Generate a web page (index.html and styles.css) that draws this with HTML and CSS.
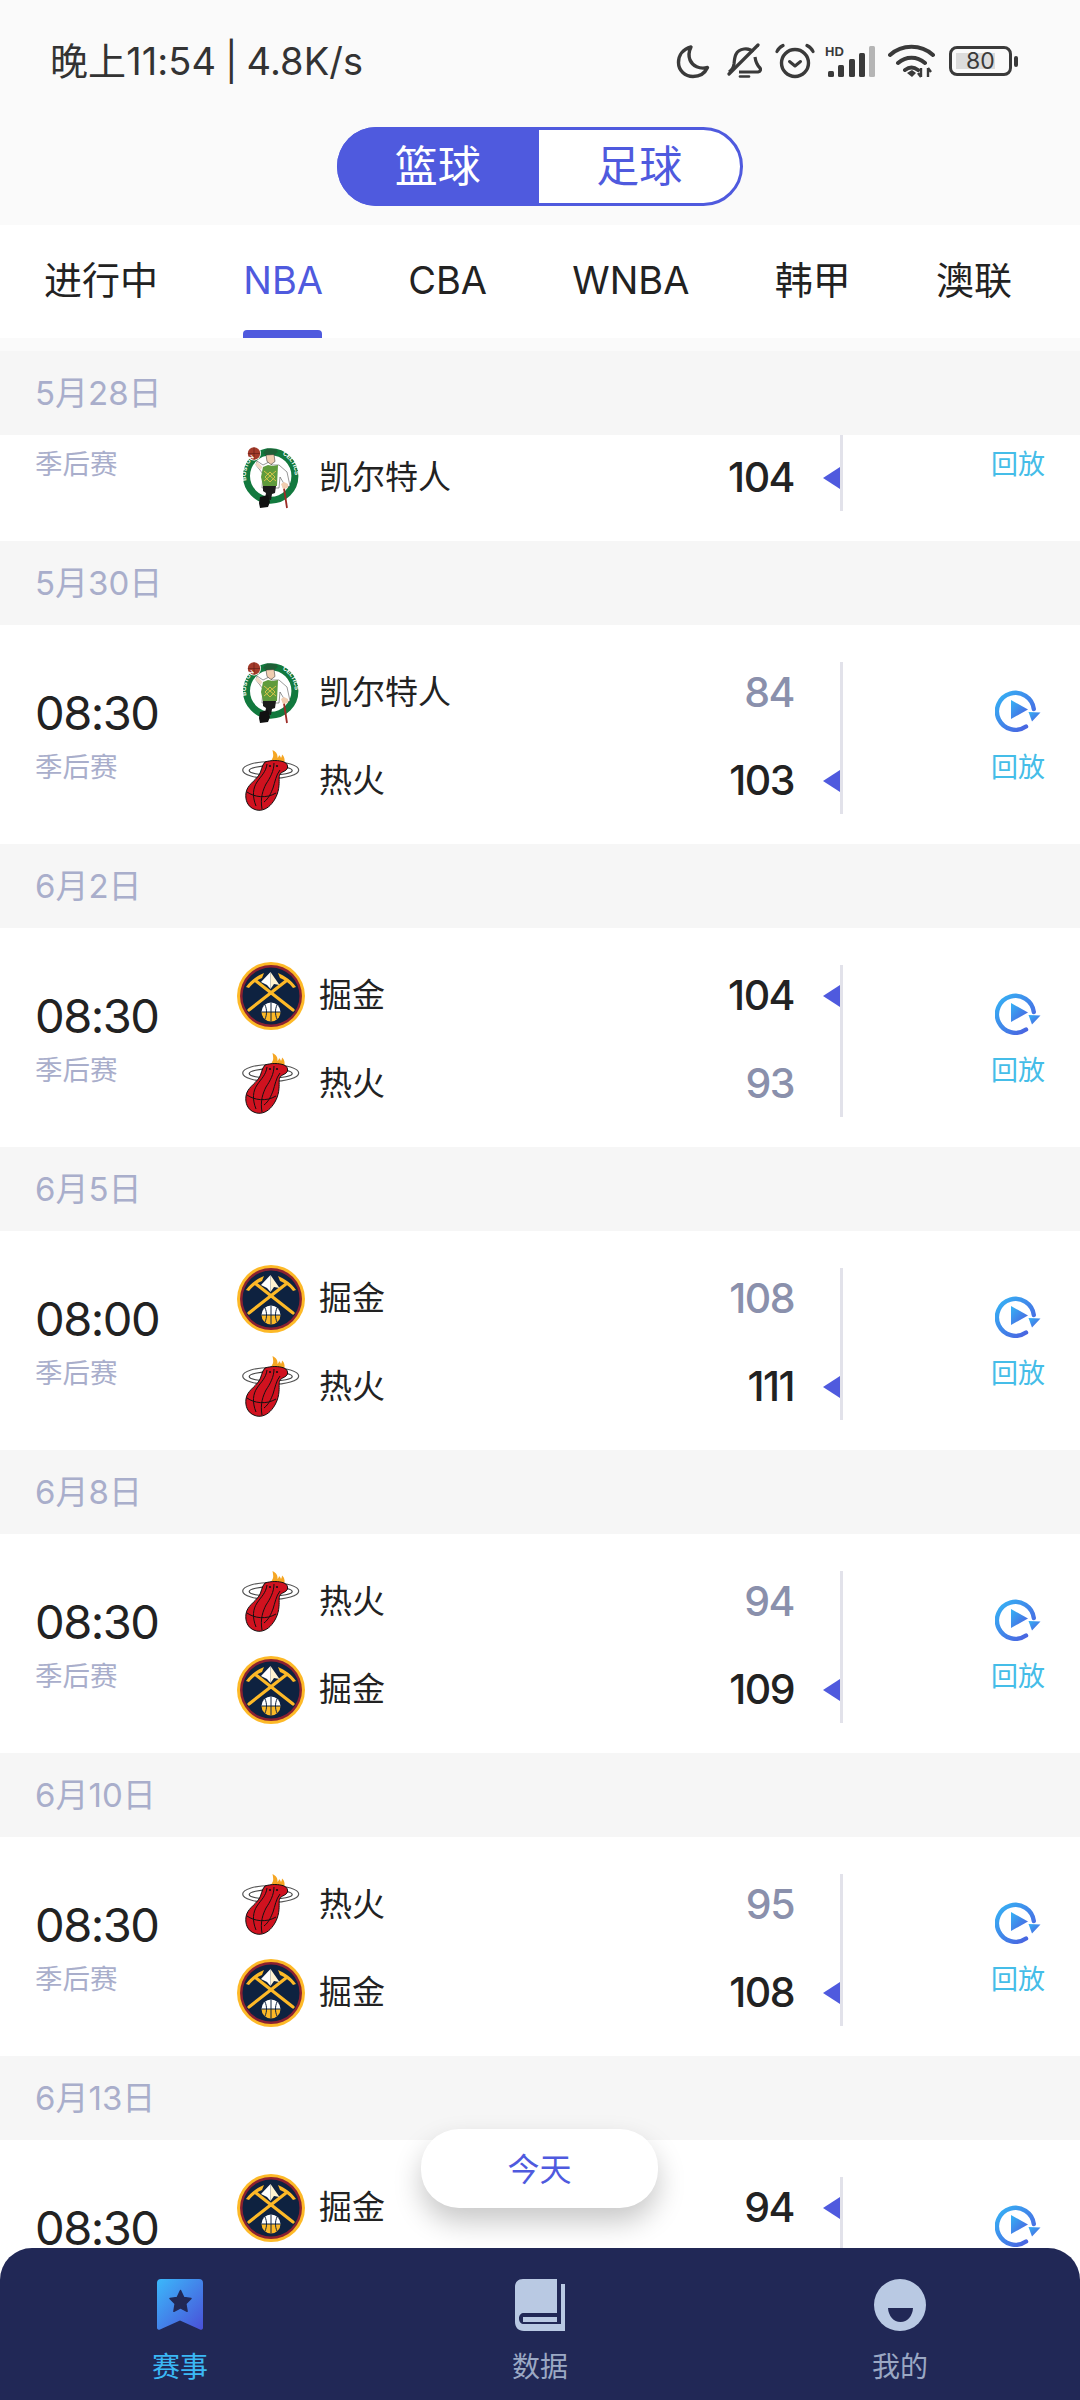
FILE: index.html
```html
<!DOCTYPE html>
<html lang="zh-CN">
<head>
<meta charset="utf-8">
<title>赛事</title>
<link rel="stylesheet" href="styles.css">
</head>
<body>
<svg class="defs" aria-hidden="true">
  <defs>
    <linearGradient id="gr-replay" x1="0" y1="0" x2="1" y2="1"><stop offset="0" stop-color="#35b4f5"/><stop offset="1" stop-color="#4c5ade"/></linearGradient>
    <linearGradient id="gr-mark" x1="0" y1="0" x2="1" y2="1"><stop offset="0" stop-color="#3bb8fb"/><stop offset="1" stop-color="#4a50d8"/></linearGradient>

    <symbol id="celtics" viewBox="0 0 68 68">
      <circle cx="33.7" cy="32" r="29" fill="#fff"/>
      <circle cx="33.7" cy="32" r="24.200" fill="#fff" stroke="#12793e" stroke-width="7"/>
      <circle cx="17" cy="9.500" r="7" fill="#fff"/>
      <circle cx="17" cy="9.500" r="6.200" fill="#a33a2a"/>
      <path d="M11 9.500h12M17 3.500v12" stroke="#5c1d14" stroke-width=".6"/>
      <path d="M20 17l6 4 6-3 3 3 7 0 8 7 3 14-4 1-6-10-1 11H25l1-14-7-9z" fill="#fff" stroke="#333" stroke-width=".5"/>
      <path d="M20 17.500l-1.500 3.500 5 5 2-3z" fill="#f3d9c5"/>
      <path d="M26 9l4-4.500 8 .5 3 2.500-3 3-9 .5z" fill="#1f5f36"/>
      <path d="M29 11l8-.5 1 7-4 3-4-3z" fill="#f0cdb0" stroke="#222" stroke-width=".5"/>
      <path d="M26 23l5-2 5 1 5-1-1 21H26l-2-9z" fill="#5f9b3c"/>
      <path d="M27 27l12 10M39 27L27 37M28 33l5-5 5 5-5 5z" stroke="#d5c34a" stroke-width="1" fill="none"/>
      <path d="M26 42h13l-1 7-3 1-1 6-6-1 1-6-3-2z" fill="#1b1b1b"/>
      <path d="M23 53l8-2 2 7-2 5-8 1-1-5z" fill="#111"/>
      <path d="M46.500 41l3.500 23" stroke="#9b2b25" stroke-width="1.800"/>
      <path d="M44 40l3-2 4 2 0 4-5 1z" fill="#f0cdb0"/>
      <path id="arc-l" d="M15.500 49A25 25 0 0 1 27 8" fill="none"/>
      <path id="arc-r" d="M40 8A25 25 0 0 1 53 47" fill="none"/>
      <text class="ring-text"><textPath href="#arc-l" startOffset="14">BOSTON</textPath></text>
      <text class="ring-text"><textPath href="#arc-r" startOffset="6">CELTICS</textPath></text>
    </symbol>

    <symbol id="heat" viewBox="0 0 68 68">
      <path d="M35 17c-2-3 .5-5 1-7 .5-2 0-4-.5-7 3.500 1.500 5.500 4.500 5 8 1-.8 1.500-2 1.500-3 1 1 1.500 1.500 2 3 .5-1 1-2 1-3.500 3 2.500 3 6 2 10z" fill="#f5a623"/>
      <ellipse cx="33.700" cy="23" rx="28" ry="8.500" fill="#fff" stroke="#555" stroke-width="1.200"/>
      <ellipse cx="33.700" cy="23.500" rx="21.500" ry="4.600" fill="#fff" stroke="#444" stroke-width="1.200"/>
      <path d="M28 15c6-2 14-2 19 0 2.500 1 4 3 3.500 6-1 3-5 3.500-7 5.500-2 2-1 6-1.500 12-.6 8-4 15-9 20-4 4-10 6-15 4C10.500 60 8 53 9 46c1-8 9-12 13-18 2.500-3.500 2.500-9.500 6-13z" fill="#d0121f" stroke="#111" stroke-width="1"/>
      <path d="M30 17c-1 8-6 12-10 18-4 6-5 14-1 24M37 16c0 8-4 15-8 21-3 6-6 14-4 25M43 23c-4 5-5 12-7 18-2 5-4 10-9 14M10 45c7 5 19 7 29 1" fill="none" stroke="#111" stroke-width="1"/>
      <circle cx="33" cy="19" r="1.100" fill="#111"/>
      <circle cx="40" cy="19" r="1.100" fill="#111"/>
    </symbol>

    <symbol id="nuggets" viewBox="0 0 68 68">
      <circle cx="34" cy="34" r="34" fill="#fdb927"/>
      <circle cx="34" cy="34" r="31" fill="#8b2131"/>
      <circle cx="34" cy="34" r="28.500" fill="#0e2240"/>
      <path d="M12 48L49 19M56 48L19 19" stroke="#fdb927" stroke-width="3.200" stroke-linecap="round"/>
      <path d="M9 25c5-7 11-11 18-14l-2 5c-5 2-9 5-13 10zM59 25c-5-7-11-11-18-14l2 5c5 2 9 5 13 10z" fill="#fdb927"/>
      <path d="M33.500 10l-9.500 10 6 3 3.500 4z" fill="#fff"/>
      <path d="M33.500 10l9 13-5.500-1-3.500 5z" fill="#fff3d0"/>
      <path d="M24.500 50a9.500 9.500 0 0 1 19 0z" fill="#fff"/>
      <path d="M24.500 50a9.500 9.500 0 0 0 19 0z" fill="#fdb927"/>
      <path d="M24.500 50h19M34 40.500v19M28 43c2 4 2 10 0 14M40 43c-2 4-2 10 0 14" stroke="#0e2240" stroke-width="1" fill="none"/>
    </symbol>

    <symbol id="replay" viewBox="0 0 46 44">
      <path d="M31 38.500A18.500 18.500 0 1 1 38.800 21" fill="none" stroke="url(#gr-replay)" stroke-width="4.400" stroke-linecap="round"/>
      <path d="M16 12l17 9.500-17 9.500z" fill="url(#gr-replay)"/>
      <path d="M33.500 24l12 .5-8.500 9z" fill="url(#gr-replay)"/>
    </symbol>
  </defs>
</svg>

<div class="app">
  <header class="top">
    <div class="status">
      <span class="status-text">晚上11:54 | 4.8K/s</span>
      <div class="status-icons">
        <svg class="si-moon" viewBox="0 0 34 35"><path d="M15 3C7 5 2.500 11 2.500 18.500 2.500 26.500 9 32.500 17 32.500c6.500 0 12-3.500 14.500-9-8 2-15-1.500-17.500-7.500-1.500-4-1-9 1-13z" fill="none" stroke="#3a3a3a" stroke-width="3.400" stroke-linejoin="round"/></svg>
        <svg class="si-bell" viewBox="0 0 36 36"><path d="M3 29c3-2 4.500-4 5-8 .5-6 1-14 10-15 4-.5 7 .5 9 3M29 14c.5 4 1 7 5 11 1 1.500.5 3.500-2 4H13" fill="none" stroke="#3a3a3a" stroke-width="3.200" stroke-linejoin="round"/><path d="M3 31L32 2" stroke="#3a3a3a" stroke-width="3.200" stroke-linecap="round"/><path d="M14 33.500h9" stroke="#3a3a3a" stroke-width="2.600" stroke-linecap="round"/></svg>
        <svg class="si-alarm" viewBox="0 0 40 36"><circle cx="20" cy="20" r="13.500" fill="none" stroke="#3a3a3a" stroke-width="3.400"/><path d="M14.500 18.500L20 23l5.500-4.500" fill="none" stroke="#3a3a3a" stroke-width="3" stroke-linecap="round" stroke-linejoin="round"/><path d="M2 8.500c1-2.500 3-4.500 6-6M38 8.500c-1-2.500-3-4.500-6-6" fill="none" stroke="#3a3a3a" stroke-width="3.200" stroke-linecap="round"/></svg>
        <svg class="si-signal" viewBox="0 0 50 32"><text class="hd" x="0" y="11">HD</text><rect x="3" y="26" width="6" height="6" rx="1.500" fill="#3a3a3a"/><rect x="13" y="20" width="6" height="12" rx="1.500" fill="#3a3a3a"/><rect x="24" y="14" width="6" height="18" rx="1.500" fill="#3a3a3a"/><rect x="34" y="8" width="6" height="24" rx="1.500" fill="#3a3a3a"/><rect x="44" y="1" width="6" height="31" rx="1.500" fill="#b5b5b5"/></svg>
        <svg class="si-wifi" viewBox="0 0 47 34"><path d="M2 11c12-11 31-11 43 0M10 19c8-7 19-7 27 0M17 26c4-3 9-3 13 0" fill="none" stroke="#3a3a3a" stroke-width="4" stroke-linecap="round"/><path d="M19 29l5-3 4 3-4 4z" fill="#3a3a3a"/><path d="M33 24v9M33 33l-3-4M40 24v9M40 24l3 4" stroke="#3a3a3a" stroke-width="2.400" fill="none"/></svg>
        <div class="battery"><span class="battery-body"><span class="battery-fill">80</span></span><span class="battery-cap"></span></div>
      </div>
    </div>
    <div class="switch-wrap">
      <div class="switch">
        <span class="switch-item is-on">篮球</span>
        <span class="switch-item">足球</span>
      </div>
    </div>
  </header>

  <nav class="tabs">
    <span class="tab">进行中</span>
    <span class="tab is-active">NBA</span>
    <span class="tab">CBA</span>
    <span class="tab">WNBA</span>
    <span class="tab">韩甲</span>
    <span class="tab">澳联</span>
  </nav>

  <main class="list">
    <div class="sticky-gap"></div>
    <div class="date is-sticky">5月28日</div>
    <article class="row is-scrolled">
      <div class="meta"><span class="time">08:30</span><span class="stage">季后赛</span></div>
      <div class="teams">
        <div class="team is-under"><svg class="logo"><use href="#heat"/></svg><span class="name">热火</span><span class="score lose">103</span><span class="mark"></span></div>
        <div class="team"><svg class="logo"><use href="#celtics"/></svg><span class="name">凯尔特人</span><span class="score">104</span><span class="mark"><i class="arrow"></i></span></div>
      </div>
      <div class="action"><svg class="replay"><use href="#replay"/></svg><span class="replay-label">回放</span></div>
    </article>

    <div class="date">5月30日</div>
    <article class="row">
      <div class="meta"><span class="time">08:30</span><span class="stage">季后赛</span></div>
      <div class="teams">
        <div class="team"><svg class="logo"><use href="#celtics"/></svg><span class="name">凯尔特人</span><span class="score lose">84</span><span class="mark"></span></div>
        <div class="team"><svg class="logo"><use href="#heat"/></svg><span class="name">热火</span><span class="score">103</span><span class="mark"><i class="arrow"></i></span></div>
      </div>
      <div class="action"><svg class="replay"><use href="#replay"/></svg><span class="replay-label">回放</span></div>
    </article>

    <div class="date">6月2日</div>
    <article class="row">
      <div class="meta"><span class="time">08:30</span><span class="stage">季后赛</span></div>
      <div class="teams">
        <div class="team"><svg class="logo"><use href="#nuggets"/></svg><span class="name">掘金</span><span class="score">104</span><span class="mark"><i class="arrow"></i></span></div>
        <div class="team"><svg class="logo"><use href="#heat"/></svg><span class="name">热火</span><span class="score lose">93</span><span class="mark"></span></div>
      </div>
      <div class="action"><svg class="replay"><use href="#replay"/></svg><span class="replay-label">回放</span></div>
    </article>

    <div class="date">6月5日</div>
    <article class="row">
      <div class="meta"><span class="time">08:00</span><span class="stage">季后赛</span></div>
      <div class="teams">
        <div class="team"><svg class="logo"><use href="#nuggets"/></svg><span class="name">掘金</span><span class="score lose">108</span><span class="mark"></span></div>
        <div class="team"><svg class="logo"><use href="#heat"/></svg><span class="name">热火</span><span class="score">111</span><span class="mark"><i class="arrow"></i></span></div>
      </div>
      <div class="action"><svg class="replay"><use href="#replay"/></svg><span class="replay-label">回放</span></div>
    </article>

    <div class="date">6月8日</div>
    <article class="row">
      <div class="meta"><span class="time">08:30</span><span class="stage">季后赛</span></div>
      <div class="teams">
        <div class="team"><svg class="logo"><use href="#heat"/></svg><span class="name">热火</span><span class="score lose">94</span><span class="mark"></span></div>
        <div class="team"><svg class="logo"><use href="#nuggets"/></svg><span class="name">掘金</span><span class="score">109</span><span class="mark"><i class="arrow"></i></span></div>
      </div>
      <div class="action"><svg class="replay"><use href="#replay"/></svg><span class="replay-label">回放</span></div>
    </article>

    <div class="date">6月10日</div>
    <article class="row">
      <div class="meta"><span class="time">08:30</span><span class="stage">季后赛</span></div>
      <div class="teams">
        <div class="team"><svg class="logo"><use href="#heat"/></svg><span class="name">热火</span><span class="score lose">95</span><span class="mark"></span></div>
        <div class="team"><svg class="logo"><use href="#nuggets"/></svg><span class="name">掘金</span><span class="score">108</span><span class="mark"><i class="arrow"></i></span></div>
      </div>
      <div class="action"><svg class="replay"><use href="#replay"/></svg><span class="replay-label">回放</span></div>
    </article>

    <div class="date">6月13日</div>
    <article class="row">
      <div class="meta"><span class="time">08:30</span><span class="stage">季后赛</span></div>
      <div class="teams">
        <div class="team"><svg class="logo"><use href="#nuggets"/></svg><span class="name">掘金</span><span class="score">94</span><span class="mark"><i class="arrow"></i></span></div>
        <div class="team"><svg class="logo"><use href="#heat"/></svg><span class="name">热火</span><span class="score lose">89</span><span class="mark"></span></div>
      </div>
      <div class="action"><svg class="replay"><use href="#replay"/></svg><span class="replay-label">回放</span></div>
    </article>
  </main>

  <button class="today">今天</button>

  <footer class="bottom">
    <div class="nav-item is-current">
      <svg class="nav-icon" viewBox="0 0 52 52"><path d="M7 0h38a4 4 0 0 1 4 4v45a2 2 0 0 1-3 1.500L26 41.500 6 50.500a2 2 0 0 1-3-1.500V4a4 4 0 0 1 4-4z" fill="url(#gr-mark)"/><path d="M26.500 11.500l3.300 7 7.200 1-5.200 5.200 1.300 7.600-6.600-3.500-6.600 3.500 1.300-7.600-5.200-5.200 7.200-1z" fill="#212856" stroke="#212856" stroke-width="1.500" stroke-linejoin="round"/></svg>
      <span class="nav-label">赛事</span>
    </div>
    <div class="nav-item">
      <svg class="nav-icon" viewBox="0 0 52 52"><path d="M9 0H43V34H10C7 34 5 36 5 39.500 5 43 7 45 10 45H47V5H51V52H10C4 52 1 48 1 43V8C1 3 4 0 9 0z" fill="#b9c9e3"/><rect x="9" y="38" width="34" height="5" fill="#b9c9e3"/></svg>
      <span class="nav-label">数据</span>
    </div>
    <div class="nav-item">
      <svg class="nav-icon" viewBox="0 0 52 52"><circle cx="26" cy="26" r="26" fill="#b9c9e3"/><path d="M14 29h25c-.5 8-5.500 14-12.500 14S14.500 37 14 29z" fill="#212856"/></svg>
      <span class="nav-label">我的</span>
    </div>
  </footer>
</div>
</body>
</html>
```

FILE: styles.css
```css
* { box-sizing: border-box; }

html, body {
  margin: 0;
  padding: 0;
  background: #fff;
}

body {
  font-family: "Inter", "Noto Sans CJK SC", sans-serif;
  color: #222;
}

.defs {
  position: absolute;
  width: 0;
  height: 0;
}

.ring-text {
  font-family: "Liberation Sans", sans-serif;
  font-size: 6px;
  font-weight: 700;
  fill: #fff;
}

.app {
  position: relative;
  width: 1080px;
  height: 2400px;
  overflow: hidden;
  background: #fff;
}

/* header */
.top {
  height: 225px;
  background: #fafafa;
}

.status {
  height: 127px;
  padding: 40px 62px 0 50px;
  display: flex;
  justify-content: space-between;
  align-items: flex-start;
}

.status-text {
  font-size: 38px;
  line-height: 42px;
  word-spacing: -2px;
  letter-spacing: 0.1px;
  color: #333;
}

.status-icons {
  display: flex;
  align-items: center;
  height: 42px;
}

.status-icons svg { display: block; flex: none; }
.si-moon { width: 34px; height: 35px; }
.si-bell { width: 36px; height: 36px; margin-left: 16px; }
.si-alarm { width: 40px; height: 36px; margin-left: 13px; }
.si-signal { width: 50px; height: 32px; margin-left: 10px; }
.si-wifi { width: 47px; height: 34px; margin-left: 13px; }

.hd {
  font-family: "Liberation Sans", sans-serif;
  font-size: 13px;
  font-weight: 700;
  fill: #3a3a3a;
}

.battery {
  display: flex;
  align-items: center;
  margin-left: 14px;
}

.battery-body {
  width: 63px;
  height: 30px;
  padding: 4px;
  border: 3px solid #3a3a3a;
  border-radius: 8px;
  display: flex;
}

.battery-fill {
  width: 39px;
  height: 16px;
  padding-left: 10px;
  background: #dcdcdc;
  font-size: 23px;
  line-height: 16px;
  color: #3a3a3a;
  white-space: nowrap;
}

.battery-cap {
  width: 4px;
  height: 11px;
  margin-left: 2px;
  border-radius: 2px;
  background: #3a3a3a;
}

.switch-wrap {
  display: flex;
  justify-content: center;
}

.switch {
  display: flex;
  width: 406px;
  height: 79px;
  border: 3px solid #4f5ade;
  border-radius: 40px;
  background: #fff;
}

.switch-item {
  flex: 1;
  text-align: center;
  font-size: 43px;
  line-height: 73px;
  color: #4f5ade;
}

.switch-item.is-on {
  margin: -3px 0 -3px -3px;
  border-radius: 40px 0 0 40px;
  line-height: 79px;
  background: #4f5ade;
  color: #fff;
}

/* tabs */
.tabs {
  height: 113px;
  padding: 0 68px 0 44px;
  display: flex;
  justify-content: space-between;
  background: #fff;
}

.tab {
  position: relative;
  font-size: 38px;
  line-height: 110px;
  color: #222;
}

.tab.is-active { color: #4f5ade; }

.tab.is-active::after {
  content: "";
  position: absolute;
  left: 0;
  right: 1px;
  bottom: 0;
  height: 8px;
  border-radius: 4px 4px 0 0;
  background: #4f5ade;
}

/* list */
.list {
  background: #f6f6f6;
}

.sticky-gap {
  position: relative;
  z-index: 1;
  height: 13px;
  background: #fafafa;
}

.date {
  position: relative;
  z-index: 1;
  height: 84px;
  padding-left: 35px;
  background: #f6f6f6;
  font-size: 33px;
  line-height: 84px;
  color: #a9aecb;
}

.row {
  display: flex;
  height: 219px;
  background: #fff;
}

.row.is-scrolled {
  margin-top: -113px;
}

/* hidden under the sticky date band, as the list is scrolled */
.is-scrolled .time,
.is-scrolled .is-under,
.is-scrolled .replay {
  visibility: hidden;
}

.meta {
  flex: none;
  width: 237px;
  padding: 62px 0 0 35px;
  display: flex;
  flex-direction: column;
}

.time {
  font-size: 47px;
  line-height: 52px;
  letter-spacing: -1.5px;
  color: #222;
}

.stage {
  margin-top: 14px;
  font-size: 27.500px;
  line-height: 28px;
  color: #a9aecb;
}

.teams {
  flex: none;
  width: 606px;
  height: 152px;
  margin-top: 37px;
  display: flex;
  flex-direction: column;
  gap: 26px;
  border-right: 3px solid #e2e2ea;
}

.team {
  height: 62px;
  display: flex;
  align-items: center;
}

.logo {
  flex: none;
  width: 68px;
  height: 68px;
}

.name {
  margin: 0 0 6px 14px;
  font-size: 33px;
  color: #222;
}

.score {
  margin: 0 0 2px auto;
  font-size: 41px;
  font-weight: 500;
  letter-spacing: -1.5px;
  color: #222;
}

.score.lose {
  color: #8a90ac;
}

.mark {
  flex: none;
  width: 46px;
  display: flex;
  justify-content: flex-end;
}

.arrow {
  width: 0;
  height: 0;
  border-top: 11.5px solid transparent;
  border-bottom: 11.5px solid transparent;
  border-right: 17px solid #4f5ade;
}

.action {
  flex: none;
  width: 122px;
  margin-left: 114px;
  padding-top: 63px;
  display: flex;
  flex-direction: column;
  align-items: center;
}

.replay {
  width: 46px;
  height: 44px;
}

.replay-label {
  margin-top: 20px;
  font-size: 27px;
  line-height: 32px;
  color: #45bde8;
}

/* floating */
.today {
  position: absolute;
  left: 421px;
  top: 2129px;
  z-index: 3;
  width: 237px;
  height: 79px;
  padding: 0 0 4px;
  border: 0;
  border-radius: 38px;
  background: #fff;
  box-shadow: 0 14px 28px rgba(0, 0, 0, 0.22);
  font-family: inherit;
  font-size: 32px;
  color: #4f5ade;
}

/* bottom nav */
.bottom {
  position: absolute;
  left: 0;
  right: 0;
  bottom: 0;
  z-index: 4;
  height: 152px;
  padding-top: 31px;
  display: flex;
  background: #212856;
  border-radius: 32px 32px 0 0;
}

.nav-item {
  flex: 1;
  display: flex;
  flex-direction: column;
  align-items: center;
}

.nav-icon {
  width: 52px;
  height: 52px;
}

.nav-label {
  margin-top: 21px;
  font-size: 28px;
  line-height: 30px;
  color: #9ba8c4;
}

.nav-item.is-current .nav-label {
  color: #3bb8f5;
}
```
